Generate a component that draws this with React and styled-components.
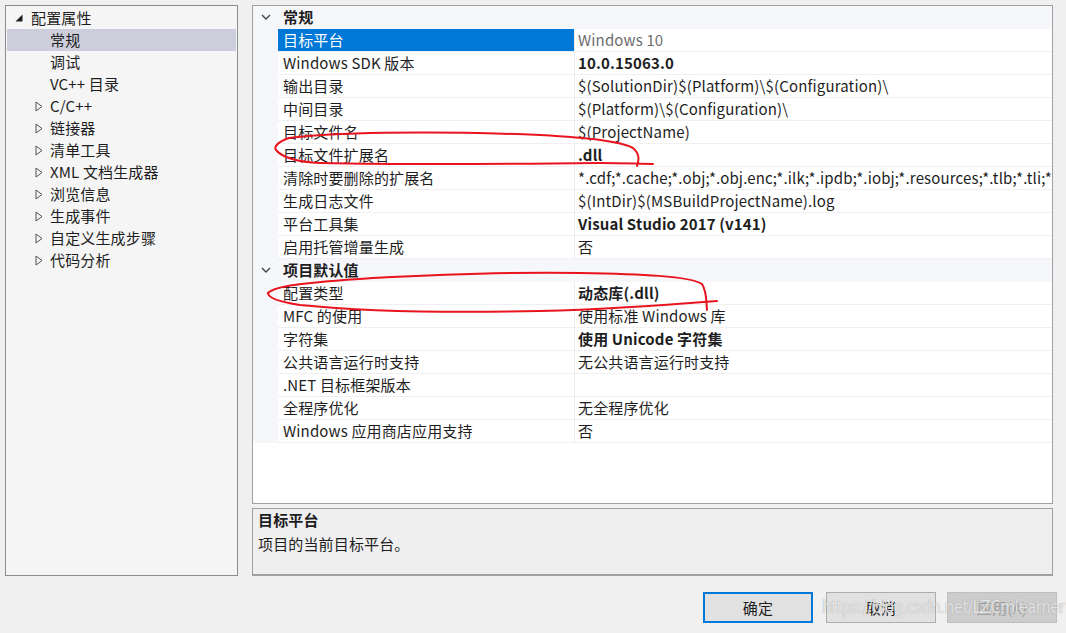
import React from "react";
import styled, { createGlobalStyle } from "styled-components";

const Global = createGlobalStyle`
  html, body { margin: 0; padding: 0; background: #f0f0f0; }
  body { font-family: "Noto Sans CJK SC", "Noto Sans", sans-serif; font-size: 15px; color: #1e1e1e; letter-spacing: 0.15px; }
`;

const Window = styled.div`
  position: relative;
  width: 1066px;
  height: 633px;
  background: #f0f0f0;
  display: flex;
  flex-direction: column;
  overflow: hidden;
`;

const Main = styled.div`
  display: flex;
  gap: 14px;
  padding: 5px 13px 0 5px;
  height: 571px;
`;

const TreePanel = styled.div`
  width: 233px;
  box-sizing: border-box;
  border: 1px solid #8c8c8c;
  background: #f5f5f5;
  padding: 1px;
`;

const TreeRow = styled.div`
  display: flex;
  align-items: center;
  height: 22px;
  line-height: 22px;
  padding-left: ${(p) => p.$indent}px;
  background: ${(p) => (p.$selected ? "#cccfdb" : "transparent")};
  white-space: nowrap;
`;

const TreeGlyph = styled.span`
  display: inline-flex;
  width: ${(p) => p.$w}px;
  align-items: center;
`;

const RightCol = styled.div`
  flex: 1;
  display: flex;
  flex-direction: column;
  gap: 4px;
  min-width: 0;
`;

const GridPanel = styled.div`
  height: 499px;
  box-sizing: border-box;
  border: 1px solid #a0a0a0;
  background: #ffffff;
  overflow: hidden;
`;

const Row = styled.div`
  display: grid;
  grid-template-columns: 25px 296px minmax(0, 1fr);
  height: 23px;
  line-height: 22px;
`;

const Gutter = styled.div`
  background: #f6f7fb;
  display: flex;
  align-items: center;
  justify-content: center;
`;

const HeaderCell = styled.div`
  grid-column: 2 / 4;
  background: #f6f7fb;
  font-weight: 700;
  padding-left: 5px;
`;

const NameCell = styled.div`
  box-sizing: border-box;
  padding-left: 5px;
  border-bottom: 1px solid #f0f0f0;
  background: ${(p) => (p.$selected ? "#0078d7" : "#ffffff")};
  color: ${(p) => (p.$selected ? "#ffffff" : "#1e1e1e")};
  white-space: nowrap;
  overflow: hidden;
  min-width: 0;
`;

const ValueCell = styled.div`
  box-sizing: border-box;
  padding-left: 3px;
  border-left: 1px solid #ececec;
  border-bottom: 1px solid #f0f0f0;
  white-space: nowrap;
  overflow: hidden;
  min-width: 0;
  font-weight: ${(p) => (p.$bold ? 700 : 400)};
  color: ${(p) => (p.$gray ? "#6d6d6d" : "#1e1e1e")};
`;

const DescPanel = styled.div`
  height: 68px;
  box-sizing: border-box;
  border: 1px solid #a0a0a0;
  border-bottom: 2px solid #a0a0a0;
  background: #efefef;
  padding: 0 5px;
  line-height: 24px;
`;

const DescTitle = styled.div`
  font-weight: 700;
  margin-top: -1px;
`;

const Footer = styled.div`
  display: flex;
  justify-content: flex-end;
  gap: 11px;
  padding: 16px 9px 0 0;
`;

const Button = styled.button`
  width: 110px;
  height: 31px;
  box-sizing: border-box;
  margin: 0;
  font-family: inherit;
  font-size: 15px;
  letter-spacing: inherit;
  background: ${(p) => (p.$disabled ? "#cccccc" : "#e1e1e1")};
  color: ${(p) => (p.$disabled ? "#a0a0a0" : "#1e1e1e")};
  border: ${(p) =>
    p.$primary ? "2px solid #0078d7" : p.$disabled ? "1px solid #bfbfbf" : "1px solid #adadad"};
  margin-right: ${(p) => (p.$primary ? 2 : 0)}px;
  padding: 0;
`;

const Watermark = styled.div`
  position: absolute;
  left: 822px;
  top: 597px;
  font-family: "DejaVu Sans Condensed", "Liberation Sans", sans-serif;
  font-size: 17px;
  letter-spacing: -0.6px;
  color: rgba(255, 255, 255, 0.75);
  text-shadow: 0 0 1px rgba(110, 110, 110, 0.7);
  pointer-events: none;
  white-space: nowrap;
`;

const Annotations = styled.svg`
  position: absolute;
  left: 0;
  top: 0;
  width: 1066px;
  height: 633px;
  pointer-events: none;
`;

const Chevron = () => (
  <svg width="10" height="7" viewBox="0 0 10 7">
    <path d="M1 1 L5 5 L9 1" fill="none" stroke="#444" strokeWidth="1.4" />
  </svg>
);

const OpenTri = () => (
  <svg width="8" height="8" viewBox="0 0 8 8">
    <path d="M7.5 0.5 L7.5 7.5 L0.5 7.5 Z" fill="#1e1e1e" />
  </svg>
);

const ClosedTri = () => (
  <svg width="8" height="11" viewBox="0 0 8 11">
    <path d="M1 1 L7 5.5 L1 10 Z" fill="none" stroke="#505050" strokeWidth="1" />
  </svg>
);

const treeItems = [
  { label: "常规", selected: true },
  { label: "调试" },
  { label: "VC++ 目录" },
  { label: "C/C++", expand: true },
  { label: "链接器", expand: true },
  { label: "清单工具", expand: true },
  { label: "XML 文档生成器", expand: true },
  { label: "浏览信息", expand: true },
  { label: "生成事件", expand: true },
  { label: "自定义生成步骤", expand: true },
  { label: "代码分析", expand: true },
];

const sections = [
  {
    title: "常规",
    items: [
      { name: "目标平台", value: "Windows 10", gray: true, selected: true },
      { name: "Windows SDK 版本", value: "10.0.15063.0", bold: true },
      { name: "输出目录", value: "$(SolutionDir)$(Platform)\\$(Configuration)\\" },
      { name: "中间目录", value: "$(Platform)\\$(Configuration)\\" },
      { name: "目标文件名", value: "$(ProjectName)" },
      { name: "目标文件扩展名", value: ".dll", bold: true },
      {
        name: "清除时要删除的扩展名",
        value:
          "*.cdf;*.cache;*.obj;*.obj.enc;*.ilk;*.ipdb;*.iobj;*.resources;*.tlb;*.tli;*.tlh;*.tmp;*.rsp;*.pgc;*.pgd;*.meta;*.tlog;*.manifest;*.res;*.pch;*.exp;*.idb;*.rep;*.xdc;*.pdb;*_manifest.rc;*.bsc;*.sbr;*.xml;*.metagen;*.bi",
      },
      { name: "生成日志文件", value: "$(IntDir)$(MSBuildProjectName).log" },
      { name: "平台工具集", value: "Visual Studio 2017 (v141)", bold: true },
      { name: "启用托管增量生成", value: "否" },
    ],
  },
  {
    title: "项目默认值",
    items: [
      { name: "配置类型", value: "动态库(.dll)", bold: true },
      { name: "MFC 的使用", value: "使用标准 Windows 库" },
      { name: "字符集", value: "使用 Unicode 字符集", bold: true },
      { name: "公共语言运行时支持", value: "无公共语言运行时支持" },
      { name: ".NET 目标框架版本", value: "" },
      { name: "全程序优化", value: "无全程序优化" },
      { name: "Windows 应用商店应用支持", value: "否" },
    ],
  },
];

export default function App() {
  return (
    <>
      <Global />
      <Window>
        <Main>
          <TreePanel>
            <TreeRow $indent={8}>
              <TreeGlyph $w={16}>
                <OpenTri />
              </TreeGlyph>
              配置属性
            </TreeRow>
            {treeItems.map((t) => (
              <TreeRow key={t.label} $indent={28} $selected={t.selected}>
                <TreeGlyph $w={15}>{t.expand ? <ClosedTri /> : null}</TreeGlyph>
                {t.label}
              </TreeRow>
            ))}
          </TreePanel>
          <RightCol>
            <GridPanel>
              {sections.map((s) => (
                <React.Fragment key={s.title}>
                  <Row>
                    <Gutter>
                      <Chevron />
                    </Gutter>
                    <HeaderCell>{s.title}</HeaderCell>
                  </Row>
                  {s.items.map((it) => (
                    <Row key={it.name}>
                      <Gutter />
                      <NameCell $selected={it.selected}>{it.name}</NameCell>
                      <ValueCell $bold={it.bold} $gray={it.gray}>
                        {it.value}
                      </ValueCell>
                    </Row>
                  ))}
                </React.Fragment>
              ))}
            </GridPanel>
            <DescPanel>
              <DescTitle>目标平台</DescTitle>
              <div>项目的当前目标平台。</div>
            </DescPanel>
          </RightCol>
        </Main>
        <Footer>
          <Button $primary>确定</Button>
          <Button>取消</Button>
          <Button $disabled>应用(A)</Button>
        </Footer>
        <Watermark>https://blog.csdn.net/LZCmlearner</Watermark>
        <Annotations viewBox="0 0 1066 633">
          <path
            d="M289 138 C 330 133, 420 130, 540 135 C 590 138, 620 141, 633 148 C 640 154, 639 160, 637 166"
            fill="none"
            stroke="#e8141e"
            strokeWidth="2"
            strokeLinecap="round"
          />
          <path
            d="M289 138 C 280 141, 273 146, 276 150 C 282 157, 295 162, 320 163 C 420 165, 520 164, 600 163 C 625 163, 640 164, 653 164"
            fill="none"
            stroke="#e8141e"
            strokeWidth="2"
            strokeLinecap="round"
          />
          <path
            d="M268 293 C 275 286, 300 283, 373 278 C 450 274, 520 272, 580 273 C 640 274, 690 276, 702 284 C 707 292, 706 300, 707 310"
            fill="none"
            stroke="#e8141e"
            strokeWidth="2"
            strokeLinecap="round"
          />
          <path
            d="M268 293 C 268 298, 280 302, 300 305 C 360 311, 450 313, 540 311 C 620 309, 680 304, 717 301"
            fill="none"
            stroke="#e8141e"
            strokeWidth="2"
            strokeLinecap="round"
          />
        </Annotations>
      </Window>
    </>
  );
}
